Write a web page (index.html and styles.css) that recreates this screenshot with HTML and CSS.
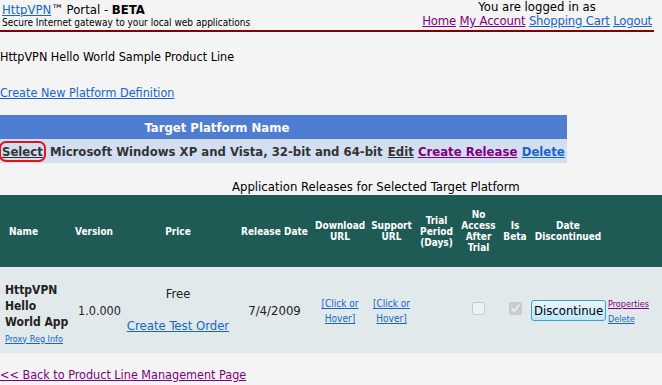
FILE: index.html
```html
<!DOCTYPE html>
<html lang="en">
<head>
    <meta charset="UTF-8">
    <title>HttpVPN Portal - Product Line</title>
    <link rel="stylesheet" href="styles.css">
</head>
<body>
    <div class="header">
        <div class="brand">
            <div class="title"><a href="#" class="link">HttpVPN</a>&trade; Portal - <b>BETA</b></div>
            <div class="tagline">Secure Internet gateway to your local web applications</div>
        </div>
        <div class="account">
            <div class="logged">You are logged in as</div>
            <div class="menu">
                <a href="#" class="visited">Home</a>
                <a href="#" class="visited">My Account</a>
                <a href="#" class="link">Shopping Cart</a>
                <a href="#" class="link">Logout</a>
            </div>
        </div>
    </div>

    <p class="lineName">HttpVPN Hello World Sample Product Line</p>
    <p class="newPlatform"><a href="#" class="link">Create New Platform Definition</a></p>

    <table class="platforms">
        <tr>
            <th class="colSelect"></th>
            <th class="colName">Target Platform Name</th>
            <th></th>
            <th></th>
            <th></th>
        </tr>
        <tr>
            <td class="colSelect"><a href="#" class="plain focused">Select</a></td>
            <td class="colName">Microsoft Windows XP and Vista, 32-bit and 64-bit</td>
            <td class="colEdit"><a href="#" class="plain">Edit</a></td>
            <td class="colCreate"><a href="#" class="visited">Create Release</a></td>
            <td class="colDelete"><a href="#" class="link">Delete</a></td>
        </tr>
    </table>

    <div class="caption">Application Releases for Selected Target Platform</div>
    <table class="releases">
        <colgroup>
            <col style="width: 68px">
            <col style="width: 52px">
            <col style="width: 116px">
            <col style="width: 77px">
            <col style="width: 54px">
            <col style="width: 49px">
            <col style="width: 41px">
            <col style="width: 43px">
            <col style="width: 30px">
            <col style="width: 76px">
            <col style="width: 56px">
        </colgroup>
        <thead>
            <tr>
                <th class="cName">Name</th>
                <th>Version</th>
                <th>Price</th>
                <th>Release Date</th>
                <th>Download URL</th>
                <th>Support URL</th>
                <th>Trial Period (Days)</th>
                <th>No Access After Trial</th>
                <th>Is Beta</th>
                <th>Date Discontinued</th>
                <th></th>
            </tr>
        </thead>
        <tbody>
            <tr>
                <td class="cName"><b>HttpVPN Hello <span class="nowrap">World App</span></b><br><a href="#" class="link small">Proxy Reg Info</a></td>
                <td class="cVersion">1.0.000</td>
                <td class="cPrice">Free<br><a href="#" class="link">Create Test Order</a></td>
                <td class="cDate">7/4/2009</td>
                <td><a href="#" class="link urlLink">[Click or Hover]</a></td>
                <td><a href="#" class="link urlLink">[Click or Hover]</a></td>
                <td></td>
                <td><input type="checkbox" disabled></td>
                <td><input type="checkbox" checked disabled></td>
                <td class="cDisc"><button class="discontinue">Discontinue</button></td>
                <td class="cProps"><a href="#" class="visited small">Properties</a><br><a href="#" class="link small">Delete</a></td>
            </tr>
        </tbody>
    </table>

    <p class="back"><a href="#" class="visited">&lt;&lt; Back to Product Line Management Page</a></p>
</body>
</html>
```

FILE: styles.css
```css
body {
    margin: 0;
    background-color: #f4f4f4;
    font-family: "DejaVu Sans Condensed", "DejaVu Sans", sans-serif;
    font-size: 12.5px;
    color: #000;
    overflow: hidden;
}
a.link { color: #1565d0; }
a.visited { color: #800080; }
a.plain { color: #333; }
.nowrap { white-space: nowrap; }

.header {
    display: flex;
    justify-content: space-between;
    align-items: flex-end;
    margin-right: 8px;
    padding: 0 2px 1px 2px;
    border-bottom: 2px solid #850000;
    height: 29px;
}
.title { font-size: 13px; line-height: 15px; }
.tagline { font-size: 10px; line-height: 12px; }
.account { text-align: center; font-size: 13px; }
.logged { line-height: 12px; margin-top: -4px; }
.menu { line-height: 16px; letter-spacing: -0.2px; }

.lineName { margin: 17px 0 0 0; line-height: 16px; }
.newPlatform { margin: 20px 0 0 0; line-height: 16px; }

.platforms {
    margin-top: 14px;
    width: 567px;
    border-collapse: collapse;
    font-weight: bold;
    font-size: 13px;
}
.platforms th {
    background-color: #4f7dd1;
    color: #fff;
    height: 24px;
    padding: 0;
}
.platforms td {
    background-color: #d3dff1;
    color: #333;
    height: 24px;
    padding: 0 2px;
    white-space: nowrap;
}
.platforms .colSelect { width: 44px; }
.focused {
    outline: 2px solid #e0141e;
    border-radius: 4px;
    outline-offset: 1px;
}

.caption {
    margin-top: 16px;
    padding-left: 232px;
    font-size: 13px;
    line-height: 16px;
}

.releases {
    width: 662px;
    border-collapse: collapse;
    table-layout: fixed;
}
.releases th {
    background-color: #1e5b55;
    color: #fff;
    font-size: 10px;
    height: 72px;
    padding: 0 2px;
    text-align: center;
    line-height: 11px;
}
.releases th.cName { text-align: left; padding-left: 9px; }
.releases td {
    box-sizing: border-box;
    background-color: #e2e9eb;
    color: #222;
    height: 86px;
    padding: 0 2px;
    text-align: center;
}
.releases td.cName { text-align: left; padding: 8px 0 0 5px; line-height: 16px; font-size: 12px; }
.releases td.cName b { color: #222; }
.releases td.cVersion { padding-left: 10px; }
.releases td.cPrice { line-height: 32px; font-size: 13px; }
.releases td.cDate { font-size: 13px; }
.releases td.cDisc { padding: 0 1px; }
.releases td.cProps { text-align: left; padding: 2px 0 0 2px; line-height: 14px; }
.small { font-size: 9px; }
.urlLink { font-size: 10px; line-height: 12px; }
.discontinue {
    font-family: "DejaVu Sans Condensed", "DejaVu Sans", sans-serif;
    font-size: 13px;
    padding: 2px 2px;
    border: 1px solid #3c9fd6;
    border-radius: 3px;
    background: linear-gradient(#eaf6fd, #bee6fd);
    color: #000;
}
input[type=checkbox] { margin: 0; width: 13px; height: 13px; }

.back { margin: 14px 0 0 0; line-height: 16px; }
```
